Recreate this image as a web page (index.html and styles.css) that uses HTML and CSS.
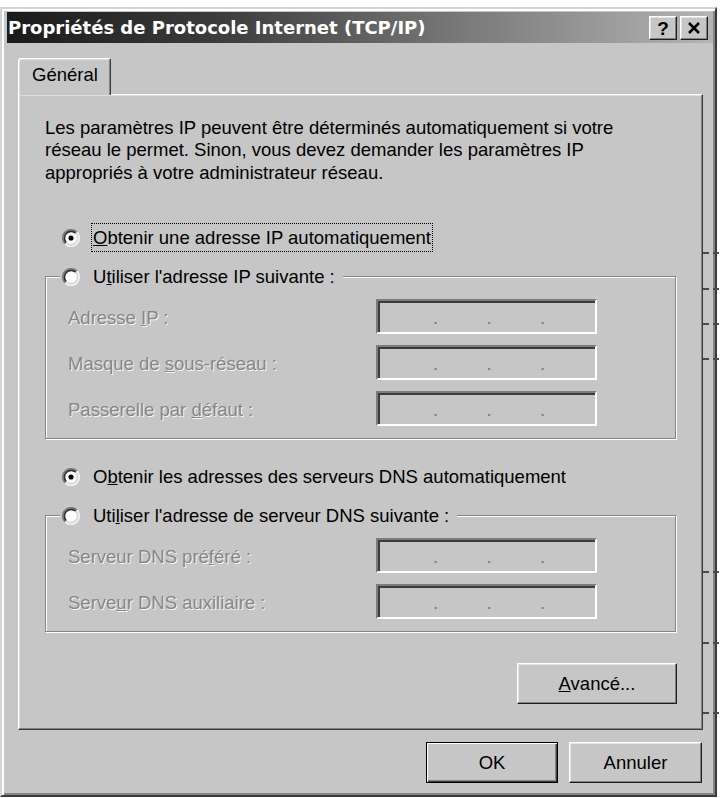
FILE: index.html
```html
<!DOCTYPE html>
<html lang="fr">
<head>
<meta charset="utf-8">
<title>Propriétés de Protocole Internet (TCP/IP)</title>
<link rel="stylesheet" href="styles.css">
</head>
<body>
<div class="window">
  <div class="titlebar">
    <span class="title">Propriétés de Protocole Internet (TCP/IP)</span>
    <div class="tb-buttons">
      <div class="tb-btn help">?</div>
      <div class="tb-btn close">
        <svg width="14" height="12" viewBox="0 0 14 12"><path d="M2 1 L12 11 M12 1 L2 11" stroke="#000" stroke-width="2.6" fill="none"/></svg>
      </div>
    </div>
  </div>
  <div class="client">
    <div class="tabs"><div class="tab">Général</div></div>
    <div class="panel">
      <p class="intro">Les paramètres IP peuvent être déterminés automatiquement si votre<br>réseau le permet. Sinon, vous devez demander les paramètres IP<br>appropriés à votre administrateur réseau.</p>

      <div class="radio-row first">
        <svg class="radio" width="18" height="18" viewBox="0 0 12 12"><circle cx="6" cy="6" r="4.6" fill="#fff"/><path d="M2.11 9.89A5.5 5.5 0 0 1 9.89 2.11" stroke="#7a7a7a" stroke-width="1.1" fill="none"/><path d="M9.89 2.11A5.5 5.5 0 0 1 2.11 9.89" stroke="#f4f4f4" stroke-width="1.1" fill="none"/><path d="M2.82 9.18A4.5 4.5 0 0 1 9.18 2.82" stroke="#2e2e2e" stroke-width="1.1" fill="none"/><path d="M9.18 2.82A4.5 4.5 0 0 1 2.82 9.18" stroke="#dadada" stroke-width="1.1" fill="none"/><circle cx="6" cy="6" r="1.7" fill="#000"/></svg>
        <span class="rlabel focus"><u>O</u>btenir une adresse IP automatiquement</span>
      </div>

      <fieldset class="group">
        <legend class="radio-row">
          <svg class="radio" width="18" height="18" viewBox="0 0 12 12"><circle cx="6" cy="6" r="4.6" fill="#fff"/><path d="M2.11 9.89A5.5 5.5 0 0 1 9.89 2.11" stroke="#7a7a7a" stroke-width="1.1" fill="none"/><path d="M9.89 2.11A5.5 5.5 0 0 1 2.11 9.89" stroke="#f4f4f4" stroke-width="1.1" fill="none"/><path d="M2.82 9.18A4.5 4.5 0 0 1 9.18 2.82" stroke="#2e2e2e" stroke-width="1.1" fill="none"/><path d="M9.18 2.82A4.5 4.5 0 0 1 2.82 9.18" stroke="#dadada" stroke-width="1.1" fill="none"/></svg>
          <span class="rlabel">U<u>t</u>iliser l'adresse IP suivante :</span>
        </legend>
        <div class="fields">
          <div class="field-row"><span class="flabel">Adresse <u>I</u>P :</span><div class="ipbox"><span>.</span><span>.</span><span>.</span></div></div>
          <div class="field-row"><span class="flabel">Masque de <u>s</u>ous-réseau :</span><div class="ipbox"><span>.</span><span>.</span><span>.</span></div></div>
          <div class="field-row"><span class="flabel">Passerelle par <u>d</u>éfaut :</span><div class="ipbox"><span>.</span><span>.</span><span>.</span></div></div>
        </div>
      </fieldset>

      <div class="radio-row dns">
        <svg class="radio" width="18" height="18" viewBox="0 0 12 12"><circle cx="6" cy="6" r="4.6" fill="#fff"/><path d="M2.11 9.89A5.5 5.5 0 0 1 9.89 2.11" stroke="#7a7a7a" stroke-width="1.1" fill="none"/><path d="M9.89 2.11A5.5 5.5 0 0 1 2.11 9.89" stroke="#f4f4f4" stroke-width="1.1" fill="none"/><path d="M2.82 9.18A4.5 4.5 0 0 1 9.18 2.82" stroke="#2e2e2e" stroke-width="1.1" fill="none"/><path d="M9.18 2.82A4.5 4.5 0 0 1 2.82 9.18" stroke="#dadada" stroke-width="1.1" fill="none"/><circle cx="6" cy="6" r="1.7" fill="#000"/></svg>
        <span class="rlabel">O<u>b</u>tenir les adresses des serveurs DNS automatiquement</span>
      </div>

      <fieldset class="group">
        <legend class="radio-row">
          <svg class="radio" width="18" height="18" viewBox="0 0 12 12"><circle cx="6" cy="6" r="4.6" fill="#fff"/><path d="M2.11 9.89A5.5 5.5 0 0 1 9.89 2.11" stroke="#7a7a7a" stroke-width="1.1" fill="none"/><path d="M9.89 2.11A5.5 5.5 0 0 1 2.11 9.89" stroke="#f4f4f4" stroke-width="1.1" fill="none"/><path d="M2.82 9.18A4.5 4.5 0 0 1 9.18 2.82" stroke="#2e2e2e" stroke-width="1.1" fill="none"/><path d="M9.18 2.82A4.5 4.5 0 0 1 2.82 9.18" stroke="#dadada" stroke-width="1.1" fill="none"/></svg>
          <span class="rlabel">Uti<u>l</u>iser l'adresse de serveur DNS suivante :</span>
        </legend>
        <div class="fields">
          <div class="field-row"><span class="flabel">Serveur DNS pré<u>f</u>éré :</span><div class="ipbox"><span>.</span><span>.</span><span>.</span></div></div>
          <div class="field-row"><span class="flabel">Serve<u>u</u>r DNS auxiliaire :</span><div class="ipbox"><span>.</span><span>.</span><span>.</span></div></div>
        </div>
      </fieldset>

      <div class="adv-row"><div class="btn adv"><span><u>A</u>vancé...</span></div></div>
    </div>
    <div class="dialog-buttons">
      <div class="btn default ok">OK</div>
      <div class="btn cancel">Annuler</div>
    </div>
  </div>
</div>
<div class="ticks">
  <i style="top:252px"></i>
  <i style="top:288px"></i>
  <i style="top:323px"></i>
  <i style="top:358px"></i>
  <i style="top:571px"></i>
  <i style="top:642px"></i>
  <i style="top:712px"></i>
</div>
</body>
</html>
```
FILE: styles.css
```css
html, body {
  margin: 0;
  padding: 0;
  background: #ffffff;
}

body {
  position: relative;
  width: 721px;
  height: 798px;
  overflow: hidden;
  font-family: "Liberation Sans", Arial, sans-serif;
  font-size: 18.5px;
  color: #000;
}

.window {
  box-sizing: border-box;
  width: 717px;
  height: 790px;
  margin-top: 7px;
  background: #c6c6c6;
  border: 2px solid;
  border-color: #d4d4d4 #3a3a3a #3a3a3a #d4d4d4;
  box-shadow: inset 2px 2px 0 #ffffff, inset -2px -2px 0 #848484;
  padding: 3px 2px 0 5px;
  display: flex;
  flex-direction: column;
}

/* Title bar */
.titlebar {
  height: 31px;
  flex: none;
  display: flex;
  align-items: center;
  justify-content: space-between;
  padding: 0 5px 0 1px;
  background: linear-gradient(90deg, #1a1a1a 0%, #3c3c3c 30%, #7a7a7a 65%, #b4b4b4 100%);
}

.title {
  font-family: "DejaVu Sans", Verdana, sans-serif;
  font-weight: bold;
  font-size: 18px;
  line-height: 31px;
  color: #ffffff;
  white-space: nowrap;
}

.tb-buttons {
  display: flex;
  gap: 3px;
}

.tb-btn {
  box-sizing: border-box;
  width: 28px;
  height: 24px;
  background: #c6c6c6;
  border: 1px solid;
  border-color: #ffffff #1e1e1e #1e1e1e #ffffff;
  box-shadow: inset -1px -1px 0 #808080, inset 1px 1px 0 #e2e2e2;
  display: flex;
  align-items: center;
  justify-content: center;
}

.tb-btn.help {
  font-family: "Liberation Sans", Arial, sans-serif;
  font-weight: bold;
  font-size: 19px;
  line-height: 1;
  padding-top: 1px;
}

/* Client area */
.client {
  flex: 1;
  display: flex;
  flex-direction: column;
  padding: 15px 10px 0 11px;
}

.tabs {
  display: flex;
  margin-bottom: -1px;
  position: relative;
  z-index: 1;
}

.tab {
  background: #c6c6c6;
  border-top: 1px solid #ffffff;
  border-left: 1px solid #ffffff;
  border-right: 1px solid #3a3a3a;
  border-top-left-radius: 3px;
  border-top-right-radius: 2px;
  box-shadow: inset -1px 0 0 #848484, inset 1px 1px 0 #e0e0e0;
  padding: 5px 12px 9px 13px;
  line-height: 22px;
  white-space: nowrap;
}

.panel {
  border: 1px solid;
  border-color: #ffffff #3a3a3a #3a3a3a #ffffff;
  box-shadow: inset -1px -1px 0 #848484, inset 1px 1px 0 #dedede;
  padding: 22px 0 25px 26px;
}

.intro {
  margin: 0;
  line-height: 22.4px;
  white-space: nowrap;
}

/* Radios */
.radio-row {
  display: flex;
  align-items: center;
  height: 29px;
  white-space: nowrap;
}

.radio-row.first {
  margin-top: 39px;
  margin-left: 17px;
}

.radio-row.dns {
  margin-top: 23px;
  margin-left: 17px;
}

.radio {
  flex: none;
  display: block;
}

.rlabel {
  margin-left: 11px;
  padding: 0 1px;
  border: 1px solid transparent;
  line-height: 27px;
}

.rlabel.focus {
  border: 1px dotted #000;
}

/* Group boxes */
.group {
  box-sizing: border-box;
  width: 631px;
  margin: 10px 0 0 0;
  padding: 0;
  min-width: 0;
  border: 1px solid #848484;
  box-shadow: inset 1px 1px 0 #ffffff, 1px 1px 0 #ffffff;
}

.group legend {
  margin-left: 14px;
  padding: 0 6px 0 2px;
  background: #c6c6c6;
}

.fields {
  display: flex;
  flex-direction: column;
  gap: 11px;
  padding: 8px 0 12px 22px;
}

.field-row {
  display: flex;
  align-items: center;
  height: 35px;
}

.flabel {
  width: 308px;
  flex: none;
  color: #868686;
  text-shadow: 1px 1px 0 #f6f6f6;
  white-space: nowrap;
  padding-top: 2px;
}

.ipbox {
  box-sizing: border-box;
  width: 221px;
  height: 35px;
  border: 2px solid;
  border-color: #7c7c7c #ffffff #ffffff #7c7c7c;
  box-shadow: inset 2px 2px 0 #3c3c3c;
  display: flex;
  align-items: flex-start;
  gap: 48.5px;
  padding: 1px 0 0 55px;
  line-height: 31px;
  color: #7a7a7a;
}

.ipbox span {
  width: 5px;
  text-align: center;
}

/* Buttons */
.btn {
  box-sizing: border-box;
  height: 41px;
  background: #c6c6c6;
  border: 1px solid;
  border-color: #ffffff #1e1e1e #1e1e1e #ffffff;
  box-shadow: inset -1px -1px 0 #808080, inset 1px 1px 0 #e4e4e4;
  display: flex;
  align-items: center;
  justify-content: center;
  white-space: nowrap;
}

.adv-row {
  width: 632px;
  margin-top: 31px;
  display: flex;
  justify-content: flex-end;
}

.btn.adv {
  width: 160px;
}

.dialog-buttons {
  display: flex;
  justify-content: flex-end;
  gap: 11px;
  margin-top: 12px;
  padding-right: 1px;
}

.btn.ok {
  width: 132px;
}

.btn.cancel {
  width: 133px;
}

.btn.default {
  border-color: #000000;
  box-shadow: inset 1px 1px 0 #ffffff, inset -1px -1px 0 #3a3a3a, inset -2px -2px 0 #848484;
}

/* small stray marks on the right edge */
.ticks {
  position: absolute;
  left: 703px;
  top: 0;
}

.ticks i {
  position: absolute;
  left: 0;
  width: 16px;
  height: 0;
  border-top: 2px dashed #4a4a4a;
}
```
